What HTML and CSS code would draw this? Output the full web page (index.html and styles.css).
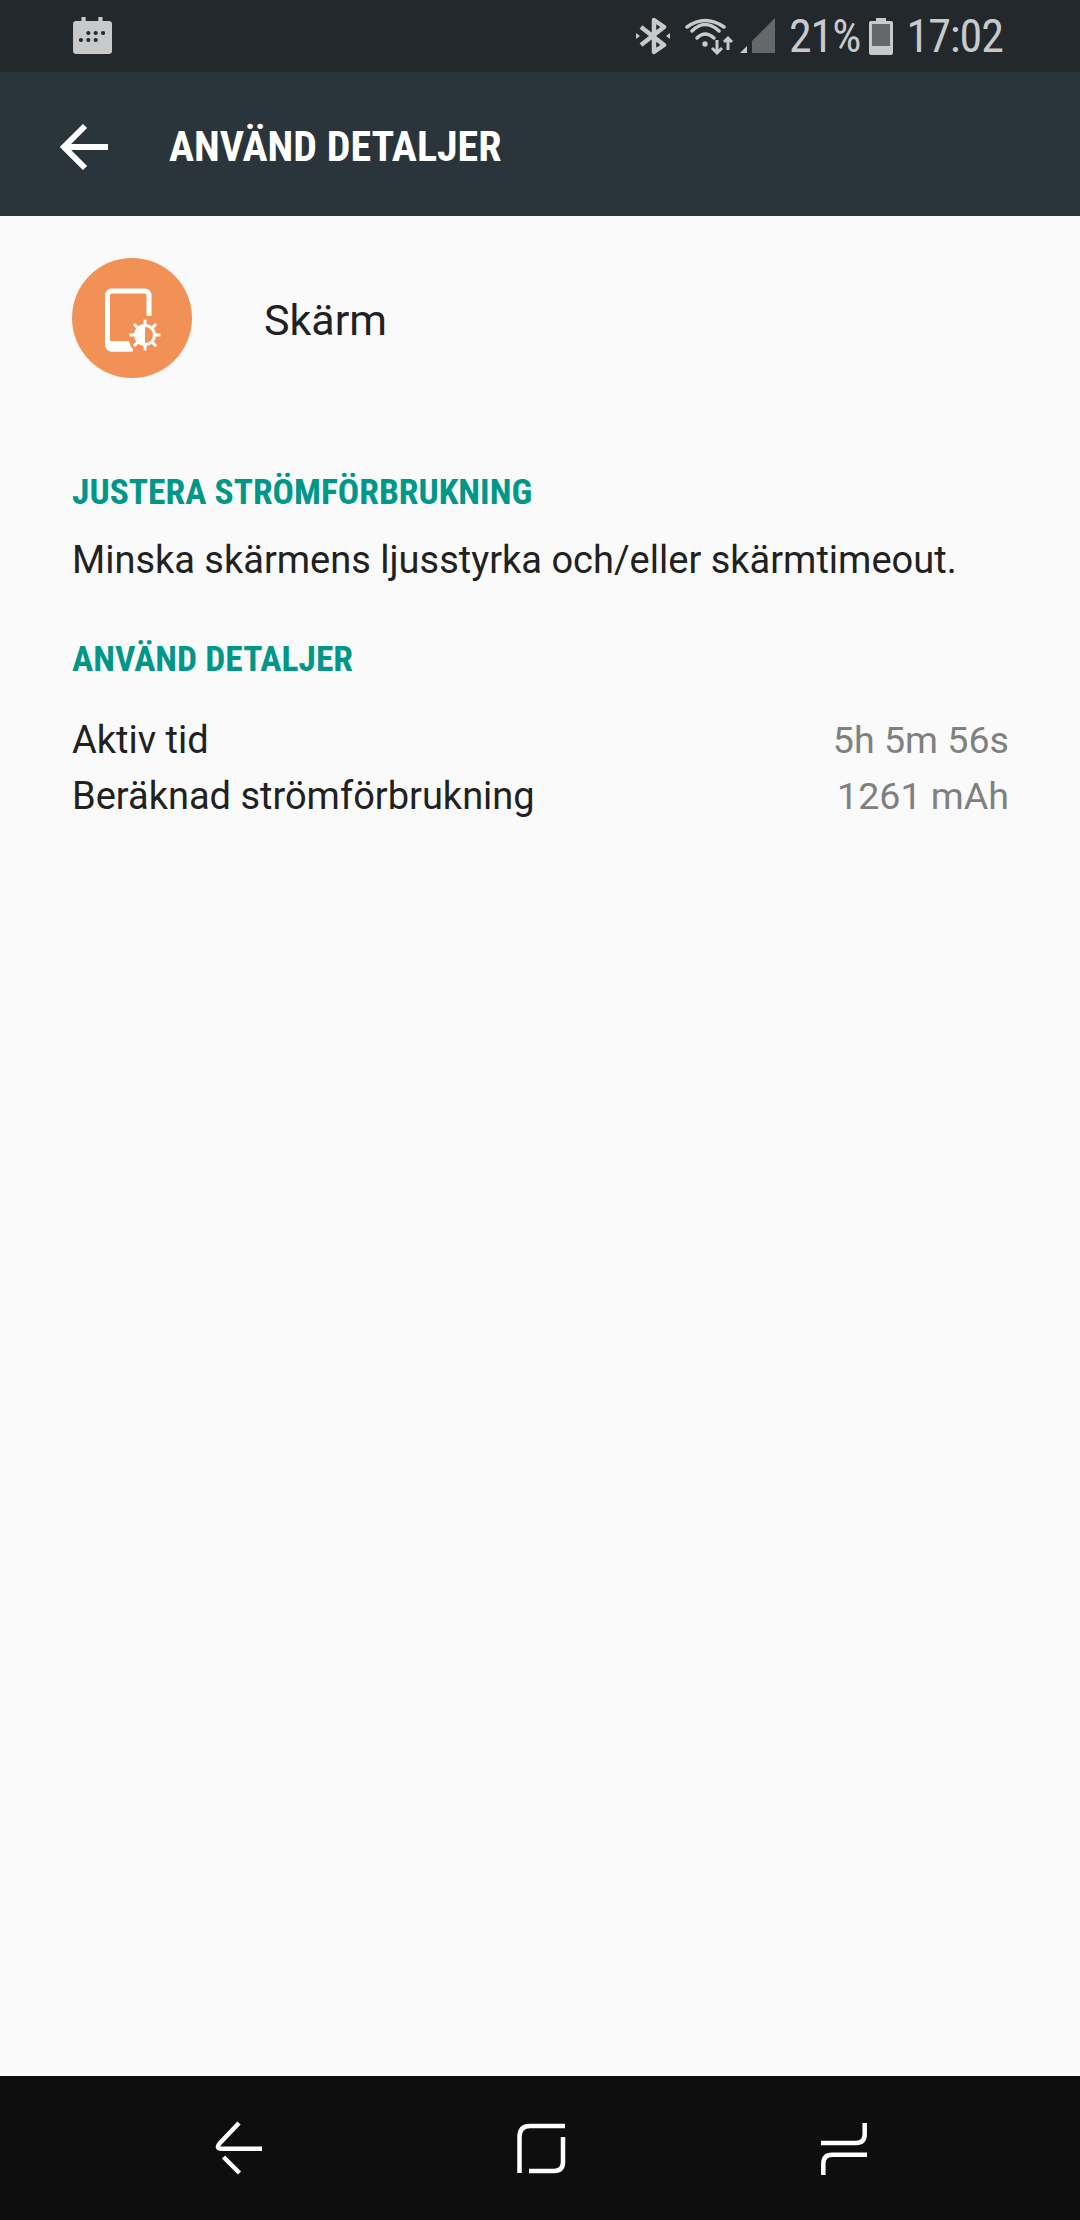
FILE: index.html
```html
<!DOCTYPE html>
<html lang="sv">
<head>
<meta charset="utf-8">
<title>Använd detaljer</title>
<link rel="stylesheet" href="styles.css">
</head>
<body>
<div class="screen">
  <header class="status">
    <svg class="cal" width="40" height="38" viewBox="0 0 38 38" preserveAspectRatio="none"><path fill="#c8c9cb" d="M9 0h4v4h12V0h4v4h6a3 3 0 0 1 3 3v27a3 3 0 0 1-3 3H4a3 3 0 0 1-3-3V7a3 3 0 0 1 3-3h5z"/><g fill="#22282c"><circle cx="15.500" cy="16" r="2"/><circle cx="22.500" cy="16" r="2"/><circle cx="29.500" cy="16" r="2"/><circle cx="8.500" cy="23" r="2"/><circle cx="15.500" cy="23" r="2"/><circle cx="22.500" cy="23" r="2"/></g></svg>
    <div class="status-right">
      <svg class="bt" width="34" height="38" viewBox="0 0 34 38"><path fill="none" stroke="#c8c9cb" stroke-width="4.500" stroke-linejoin="round" d="M5 10l23 18-10 7V3l10 7L5 28"/><path fill="#c8c9cb" d="M0 16l4 3-4 3zM34 16l-4 3 4 3z"/></svg>
      <svg class="wifi" width="48" height="38" viewBox="0 0 48 38"><g fill="none" stroke="#c8c9cb" stroke-width="3.500" stroke-linecap="round"><path d="M2 10Q20-3 39 10"/><path d="M7 14Q20 1 34 14"/><path d="M12 21Q20 13 29 21"/></g><circle cx="20" cy="27" r="2.700" fill="#c8c9cb"/><g fill="none" stroke="#c8c9cb" stroke-width="3"><path d="M32 23v13M27 31l5 5 5-5"/><path d="M43 33V21M39 25l4-4 4 4"/></g></svg>
      <svg class="sig" width="35" height="38" viewBox="0 0 35 38"><path fill="#c8c9cb" d="M0 36l7-7v7z"/><path fill="#64686b" d="M12 24L35 1v35H12z"/></svg>
      <span class="pct">21%</span>
      <svg class="bat" width="24" height="37" viewBox="0 0 24 37"><path fill="#c8c9cb" d="M7 0h10v3h5a2 2 0 0 1 2 2v30a2 2 0 0 1-2 2H2a2 2 0 0 1-2-2V5a2 2 0 0 1 2-2h5z"/><rect x="3" y="6" width="18" height="22" fill="#64686b"/></svg>
      <span class="clock">17:02</span>
    </div>
  </header>
  <nav class="toolbar">
    <svg class="arrow" width="48" height="48" viewBox="0 0 48 48"><path fill="none" stroke="#fff" stroke-width="6" d="M48 24H5M25 3L4 24l21 21"/></svg>
    <h1 class="title">ANVÄND DETALJER</h1>
  </nav>
  <main class="content">
    <div class="app">
      <div class="app-icon">
        <svg width="60" height="66" viewBox="0 0 60 66"><path fill="none" stroke="#fff" stroke-width="5" d="M44 28V7a4 4 0 0 0-4-4H6.500a4 4 0 0 0-4 4v50a4 4 0 0 0 4 4h19"/><path fill="#fff" d="M5 53h19q1 5 4 8.500v2H5z"/><circle cx="40" cy="47" r="14.500" fill="#f29155"/><circle cx="40" cy="47" r="9.500" fill="#f29155" stroke="#fff" stroke-width="3"/><path fill="#fff" d="M40 37.500a9.500 9.500 0 0 0 0 19z"/><path stroke="#fff" stroke-width="3" d="M40 31.500v5M40 57.500v5M24.500 47h5M50.500 47h5M29 36l3.500 3.500M47.500 54.500L51 58M29 58l3.500-3.500M47.500 39.500L51 36"/></svg>
      </div>
      <span class="app-name">Skärm</span>
    </div>
    <h2 class="section-head first">JUSTERA STRÖMFÖRBRUKNING</h2>
    <p class="body-text">Minska skärmens ljusstyrka och/eller skärmtimeout.</p>
    <h2 class="section-head second">ANVÄND DETALJER</h2>
    <div class="rows">
      <div class="row"><span>Aktiv tid</span><span class="value">5h 5m 56s</span></div>
      <div class="row"><span>Beräknad strömförbrukning</span><span class="value">1261 mAh</span></div>
    </div>
  </main>
  <footer class="navbar">
    <svg width="60" height="60" viewBox="0 0 60 60"><g fill="none" stroke="#fff" stroke-width="4.500"><path d="M29 3L10 23Q5 28.700 12 28.700H52"/><path d="M13.500 37L29.500 53"/></g></svg>
    <svg width="60" height="60" viewBox="0 0 60 60"><g fill="none" stroke="#fff" stroke-width="4.500"><path d="M55 6H20Q9.500 6 9.500 17V53"/><path d="M53 17V42Q53 51 44 51H19"/></g></svg>
    <svg width="60" height="60" viewBox="0 0 60 60"><g fill="none" stroke="#fff" stroke-width="4.500"><path d="M54.700 3V14Q54.700 23 46 23H11"/><path d="M57 34.700H22Q13.300 34.700 13.300 44V55"/></g></svg>
  </footer>
</div>
</body>
</html>
```
FILE: styles.css
```css
* { box-sizing: border-box; }
html, body { margin: 0; padding: 0; }
body { font-family: Roboto, "Liberation Sans", sans-serif; background: #fafafa; }
.screen { width: 1080px; height: 2220px; display: flex; flex-direction: column; }

.status { height: 72px; flex: none; background: #22282c; display: flex; align-items: center; justify-content: space-between; padding: 0 77px 0 72px; color: #c8c9cb; }
.cal { display: block; margin-top: -1px; }
.status-right { display: flex; align-items: center; }
.bt { margin-right: 15px; }
.wifi { margin-right: 7px; }
.sig { margin-right: 14px; }
.pct, .clock { font-size: 46px; line-height: 72px; font-stretch: condensed; letter-spacing: -1px; }
.bat { margin: 0 13px 0 9px; }

.toolbar { height: 144px; flex: none; background: #29343b; display: flex; align-items: center; padding: 5px 0 0 60px; }
.arrow { display: block; }
.title { margin: 0 0 0 61px; color: #fff; font-size: 42px; font-weight: 700; font-stretch: condensed; line-height: 60px; }

.content { flex: 1; padding: 42px 71px 0 72px; color: #212121; }
.app { display: flex; align-items: center; height: 120px; }
.app-icon { width: 120px; height: 120px; border-radius: 50%; background: #f29155; display: flex; align-items: center; justify-content: center; padding: 6px 0 0 6px; }
.app-name { margin-left: 72px; padding-top: 4px; font-size: 43px; }
.section-head { margin: 0; color: #009688; font-size: 35.500px; font-weight: 700; font-stretch: condensed; line-height: 50px; }
.first { margin-top: 89px; }
.body-text { margin: 18px 0 0; font-size: 38px; line-height: 50px; }
.second { margin-top: 49px; }
.rows { margin-top: 28px; font-size: 38px; line-height: 56px; }
.row { display: flex; justify-content: space-between; }
.value { color: #808080; font-size: 37.600px; }

.navbar { height: 144px; flex: none; background: #0e0e0e; display: flex; align-items: flex-start; padding: 44px 0 0 210px; gap: 240px; }
.navbar svg { display: block; }
```
